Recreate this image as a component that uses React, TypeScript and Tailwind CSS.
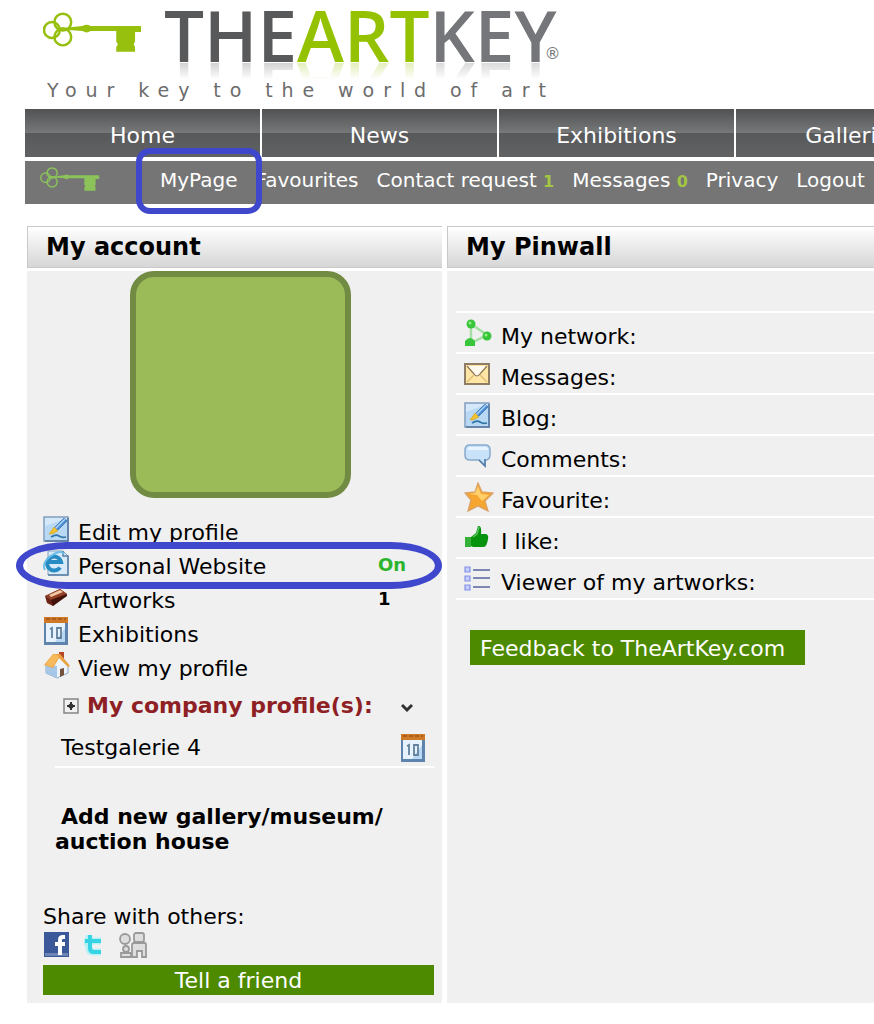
import type { ReactNode } from "react";

const navItems = ["Home", "News", "Exhibitions", "Galleries"];

function KeyIcon({ className }: { className: string }) {
  return (
    <svg viewBox="0 0 100 42" className={className} fill="none" stroke="currentColor" aria-hidden="true">
      <circle cx="9" cy="18" r="8" strokeWidth="2.500" />
      <circle cx="20" cy="10" r="8.500" strokeWidth="2.500" />
      <circle cx="20" cy="25" r="8.500" strokeWidth="2.500" />
      <path d="M15 17h10" strokeWidth="3" />
      <g fill="currentColor" stroke="none">
        <path d="M25 15.500L40 14q4-2.500 8 0h51v6h-6v10q-2.500 2 0 5v5H74v-5q3-3 0-5V19H48q-4 3-8 0l-15-1z" />
      </g>
    </svg>
  );
}

function EditIcon() {
  return (
    <svg viewBox="0 0 26 26" className="w-[26px] h-[26px]" aria-hidden="true">
      <rect x="1" y="1" width="24" height="24" fill="#d5e8fa" stroke="#7f9dbd" strokeWidth="1.500" />
      <path d="M2 24V10L24 2v22z" fill="#b9d8f4" />
      <path d="M8 21q5-3 8-1t7 1" fill="none" stroke="#2e75a8" strokeWidth="1.800" />
      <path d="M11 12L21 2l3 3-10 10z" fill="#4b8ed4" stroke="#3f74b4" strokeWidth=".8" />
      <path d="M12 13L22 3" stroke="#b5dcff" strokeWidth="1.300" />
      <path d="M6 18l5-7 4 4-6 3z" fill="#f2c12d" stroke="#c9a02c" strokeWidth=".6" />
      <path d="M25 2v23H2" fill="none" stroke="#55779d" strokeWidth="1.500" />
    </svg>
  );
}

function WebsiteIcon() {
  return (
    <svg viewBox="0 0 26 26" className="w-[26px] h-[26px]" aria-hidden="true">
      <path d="M5 1h15l5 5v19H5z" fill="#d8eaf8" stroke="#85a2c0" />
      <path d="M20 1v5h5v19H5" fill="none" stroke="#587da4" strokeWidth="1.500" />
      <path d="M17 17.500A7 7 0 1 1 18 12H6" fill="none" stroke="#278bc4" strokeWidth="4" />
      <path d="M2 20Q-2 13 8 6T21 4" fill="none" stroke="#69bee8" strokeWidth="1.800" />
    </svg>
  );
}

function ArtworksIcon() {
  return (
    <svg viewBox="0 0 26 26" className="w-[26px] h-[26px]" aria-hidden="true">
      <path d="M2 12L17 5l7 5-14 12-6-3z" fill="#6b2113" />
      <path d="M2 12L17 5l7 5-16 6z" fill="#934027" />
      <path d="M6 11l11-5 3 2-12 5z" fill="#efc7a5" />
      <path d="M8 16l16-6v2L10 22z" fill="#42130c" />
    </svg>
  );
}

function CalendarIcon() {
  return (
    <svg viewBox="0 0 26 30" className="w-[26px] h-[30px]" aria-hidden="true">
      <rect x="1" y="2" width="24" height="27" fill="#5e83ad" />
      <rect x="3" y="7" width="19" height="19" fill="#e6f2fd" />
      <path d="M12 26l10-14v14z" fill="#b9d8f3" />
      <rect x="1" y="1" width="24" height="6" fill="#cf7826" />
      <path d="M3 3h20" stroke="#a3561e" strokeWidth="1.500" strokeDasharray="4 2" />
      <path d="M7 13l2-1v10M14 12h4v10h-4z" fill="none" stroke="#63809d" strokeWidth="1.800" />
    </svg>
  );
}

function HouseIcon() {
  return (
    <svg viewBox="0 0 28 28" className="w-[28px] h-[28px]" aria-hidden="true">
      <path d="M16 1h5v9h-5z" fill="#b54826" />
      <path d="M3 13v9l11 5 11-5V13l-8-9z" fill="#edf3fa" stroke="#8ba9ca" />
      <path d="M3 13v9l11 5V15z" fill="#a7c7e9" />
      <path d="M17 3l10 12-2 1-9-9-6 10-9-3L10 3z" fill="#eda23f" />
      <path d="M16 5l-6 11-8-2L10 3z" fill="#f6b95c" />
      <path d="M17 18l4-1v7l-4 2z" fill="#76513b" />
    </svg>
  );
}

function NetworkIcon() {
  return (
    <svg viewBox="0 0 28 28" className="w-[28px] h-[28px]" aria-hidden="true">
      <path d="M7 5v19l16-8z" fill="none" stroke="#a5dfa5" strokeWidth="2.500" />
      <circle cx="7" cy="5" r="4.500" fill="#38c53b" />
      <circle cx="23" cy="17" r="4.500" fill="#38c53b" />
      <path d="M1 27v-5q5-6 10 0v5z" fill="#38c53b" />
      <circle cx="6" cy="4" r="1.500" fill="#92ed86" />
      <circle cx="22" cy="16" r="1.500" fill="#92ed86" />
    </svg>
  );
}

function MailIcon() {
  return (
    <svg viewBox="0 0 26 22" className="w-[26px] h-[22px]" aria-hidden="true">
      <rect x="1" y="1" width="24" height="20" fill="#ffe6a4" stroke="#8d7d67" strokeWidth="2" />
      <path d="M3 3h20l-7 9q-3 3-6 0z" fill="#fffaf0" />
      <path d="M3 3l7 8q3 4 6 0l7-8" fill="none" stroke="#8f774e" strokeWidth="1.200" />
      <path d="M3 19l7-7M23 19l-7-7" fill="none" stroke="#dcb96e" strokeWidth="1.200" />
    </svg>
  );
}

function CommentIcon() {
  return (
    <svg viewBox="0 0 28 26" className="w-[28px] h-[26px]" aria-hidden="true">
      <path d="M6 2h15q5 0 5 5v5q0 5-5 5v6l-6-6H6q-5 0-5-5V7q0-5 5-5z" fill="#c8e2fa" stroke="#86a9cc" strokeWidth="1.500" />
      <path d="M5 4h16q3 0 3 3H3z" fill="#e8f4ff" />
      <path d="M21 16v7l-6-6" fill="none" stroke="#527da9" strokeWidth="1.500" />
    </svg>
  );
}

function StarIcon() {
  return (
    <svg viewBox="0 0 30 30" className="w-[30px] h-[30px]" aria-hidden="true">
      <path d="M14 1l4 9 11 1-8 8 3 10-10-5-10 5 3-11-6-7 10-1z" fill="#f6a52f" stroke="#d9a268" strokeWidth="1.300" />
      <path d="M14 4l3 8 8 1-7 6-5-6-8-1 6-1z" fill="#ffd06c" />
    </svg>
  );
}

function LikeIcon() {
  return (
    <svg viewBox="0 0 26 26" className="w-[26px] h-[26px]" aria-hidden="true">
      <path d="M1 12h6v10H1z" fill="#35b038" />
      <path d="M7 12l5-4 2-7q4-1 3 8h5q3 1 2 5-1 7-4 8H9l-2-1z" fill="#07930d" />
      <path d="M9 12l4-3 2-7" fill="none" stroke="#5ac45c" strokeWidth="1.500" />
    </svg>
  );
}

function ListIcon() {
  return (
    <svg viewBox="0 0 26 26" className="w-[26px] h-[26px]" aria-hidden="true">
      <path d="M1 1h5v5H1zM1 10h5v5H1zM1 19h5v5H1z" fill="#c4ccfb" stroke="#8492e7" strokeWidth="1.200" />
      <path d="M9 4h17M9 12h17M9 21h17" stroke="#7e86b6" strokeWidth="2" />
    </svg>
  );
}

const accountLinks: { label: string; icon: ReactNode; value?: string; valueClass?: string; marked?: boolean }[] = [
  { label: "Edit my profile", icon: <EditIcon /> },
  { label: "Personal Website", icon: <WebsiteIcon />, value: "On", valueClass: "text-[#2cb52c]", marked: true },
  { label: "Artworks", icon: <ArtworksIcon />, value: "1", valueClass: "text-black" },
  { label: "Exhibitions", icon: <CalendarIcon /> },
  { label: "View my profile", icon: <HouseIcon /> },
];

const pinwallLinks = [
  { label: "My network:", icon: <NetworkIcon /> },
  { label: "Messages:", icon: <MailIcon /> },
  { label: "Blog:", icon: <EditIcon /> },
  { label: "Comments:", icon: <CommentIcon /> },
  { label: "Favourite:", icon: <StarIcon /> },
  { label: "I like:", icon: <LikeIcon /> },
  { label: "Viewer of my artworks:", icon: <ListIcon /> },
];

function Header() {
  return (
    <header className="h-[109px] pl-[43px] whitespace-nowrap">
      <div className="flex h-[79px]">
        <KeyIcon className="w-[99px] h-[42px] mt-3 mr-[22px] text-[#97bf0d] shrink-0" />
        <div className="flex items-start">
          <h1 className="font-['Open_Sans',sans-serif] font-semibold text-[71px] leading-[70px] text-[#58595b] [-webkit-box-reflect:below_-15px_linear-gradient(transparent_65%,rgba(0,0,0,0.4)_100%)]">
            THE<span className="text-[#94c100]">ART</span>
            <span className="text-[#757679]">KEY</span>
          </h1>
          <span className="-ml-3 pt-[44px] text-[16px] leading-[20px] text-[#757679]">®</span>
        </div>
      </div>
      <p className="pl-1 text-[19px] leading-[22px] tracking-[0.47em] text-[#6c6c6c]">Your key to the world of art</p>
    </header>
  );
}

function Navigation() {
  return (
    <div className="pl-[25px] whitespace-nowrap text-white">
      <nav className="flex gap-[2px] overflow-hidden">
        {navItems.map((item) => (
          <a
            key={item}
            href="#"
            className="w-[235px] h-[48px] pt-1.5 shrink-0 grow flex items-center justify-center text-[22px] leading-[28px] bg-[linear-gradient(#515254,#777878_50%,#58595b_51%,#616264)]"
          >
            {item}
          </a>
        ))}
      </nav>
      <nav className="mt-1 h-[43px] pl-[15px] pb-1.5 flex items-center gap-[18px] bg-[#757575] text-[20px] leading-[24px]">
        <KeyIcon className="w-[60px] h-[25px] mr-[42px] text-[#8bc25a] shrink-0" />
        <a href="#" className="relative">
          MyPage
          <span className="absolute z-10 -inset-x-[24px] -top-[20px] -bottom-[22px] border-[6px] border-[#3f48cc] rounded-[14px]" />
        </a>
        <a href="#">Favourites</a>
        <a href="#">Contact request <b className="text-[16px] leading-none text-[#a3c644]">1</b></a>
        <a href="#">Messages <b className="text-[16px] leading-none text-[#a3c644]">0</b></a>
        <a href="#">Privacy</a>
        <a href="#">Logout</a>
      </nav>
    </div>
  );
}

function PanelTitle({ children }: { children: ReactNode }) {
  return (
    <h2 className="h-[42px] pl-[18px] mb-[3px] flex items-center border border-[#c9c9c9] border-r-0 bg-linear-to-b from-white to-[#d6d6d6] font-bold text-[24px] leading-[28px]">
      {children}
    </h2>
  );
}

function AccountPanel() {
  return (
    <section className="w-[415px] shrink-0">
      <PanelTitle>My account</PanelTitle>
      <div className="bg-[#f0f0f0] pl-4 pr-2 pb-2">
        <div className="w-[221px] h-[227px] ml-[87px] rounded-[24px] border-[6px] border-[#728b43] bg-[#9bbb59]" />
        <ul className="mt-[14px]">
          {accountLinks.map((link) => (
            <li key={link.label} className="relative h-[34px] flex items-center">
              <span className="w-[35px] flex shrink-0">{link.icon}</span>
              <a href="#" className="w-[300px] pt-2">{link.label}</a>
              {link.value && <b className={`pt-1 text-[18px] ${link.valueClass}`}>{link.value}</b>}
              {link.marked && (
                <span className="absolute z-10 -left-[27px] -right-[8px] -top-[4px] -bottom-[9px] border-[7px] border-[#3f48cc] rounded-[52px/24px]" />
              )}
            </li>
          ))}
        </ul>
        <div className="h-[48px] pl-5 flex items-center text-[#8e1f24] font-bold">
          <svg viewBox="0 0 16 16" className="w-4 h-4 mr-2" fill="none" aria-hidden="true">
            <rect x="1" y="1" width="14" height="14" stroke="#858585" strokeWidth="1.500" />
            <path d="M4 8h8M8 4v8" stroke="#333" strokeWidth="2" />
            <circle cx="8" cy="8" r="2.500" fill="#333" />
          </svg>
          My company profile(s):
          <svg viewBox="0 0 12 10" className="w-3 h-[10px] ml-7 mt-1" fill="none" aria-hidden="true">
            <path d="M1 2l5 5 5-5" stroke="#303030" strokeWidth="3" />
          </svg>
        </div>
        <div className="h-[38px] ml-3 pl-1.5 pr-2 flex items-center justify-between border-b-2 border-white">
          <a href="#">Testgalerie 4</a>
          <CalendarIcon />
        </div>
        <a href="#" className="block mt-9 pl-3 indent-1.5 font-bold leading-[25px]">
          Add new gallery/museum/
          <br />
          auction house
        </a>
        <p className="mt-12 pt-px">Share with others:</p>
        <div className="h-[26px] flex items-center gap-[14px]">
          <a href="#" aria-label="Facebook">
            <svg viewBox="0 0 26 26" className="w-[26px] h-[26px]">
              <path d="M1 1h25v25H1z" fill="#3b5998" />
              <path d="M2 22h23v3H2z" fill="#6d84b4" />
              <path d="M22 6h-2q-3 0-3 3v15M12 13h10" fill="none" stroke="#fff" strokeWidth="4" />
            </svg>
          </a>
          <a href="#" aria-label="Twitter">
            <svg viewBox="0 0 22 24" className="w-[22px] h-[24px]">
              <path d="M6 3v13q0 4 4 4h8M6 9h12M1 10h4" fill="none" stroke="#b5f0f5" strokeWidth="7" />
              <path d="M7 3v13q0 4 4 4h7M7 9h11M2 9h4" fill="none" stroke="#35d3e4" strokeWidth="4" />
            </svg>
          </a>
          <a href="#" aria-label="Myspace">
            <svg viewBox="0 0 28 27" className="w-[28px] h-[27px]" fill="#dedede" stroke="#9a9a9a" strokeWidth="1.800">
              <circle cx="6" cy="8" r="5" />
              <rect x="15" y="2" width="10" height="9" rx="2" />
              <circle cx="7" cy="18" r="3" />
              <path d="M2 26v-4h10v4zM13 26V14q0-2 2-2h11q1 0 1 2v12h-4v-6h-5v6z" />
            </svg>
          </a>
        </div>
        <button className="block w-full mt-2 pt-0.5 h-[30px] bg-[#4e8a00] text-white">Tell a friend</button>
      </div>
    </section>
  );
}

function PinwallPanel() {
  return (
    <section className="flex-1 min-w-0 flex flex-col">
      <PanelTitle>My Pinwall</PanelTitle>
      <div className="bg-[#f0f0f0] grow pt-[40px] pl-[9px]">
        <ul className="border-t-2 border-white">
          {pinwallLinks.map((link) => (
            <li key={link.label} className="h-[41px] pl-2 flex items-center border-b-2 border-white">
              <span className="w-[37px] flex shrink-0">{link.icon}</span>
              <a href="#" className="pt-2">{link.label}</a>
            </li>
          ))}
        </ul>
        <button className="mt-[30px] ml-[14px] pl-2.5 pr-5 pt-0.5 h-[35px] bg-[#4e8a00] text-white whitespace-nowrap">
          Feedback to TheArtKey.com
        </button>
      </div>
    </section>
  );
}

export default function App() {
  return (
    <div className="min-h-screen overflow-x-hidden bg-white text-black text-[22px] leading-[28px] font-['DejaVu_Sans',sans-serif]">
      <Header />
      <Navigation />
      <main className="mt-[22px] pl-[27px] pb-5 flex gap-[5px]">
        <AccountPanel />
        <PinwallPanel />
      </main>
    </div>
  );
}
